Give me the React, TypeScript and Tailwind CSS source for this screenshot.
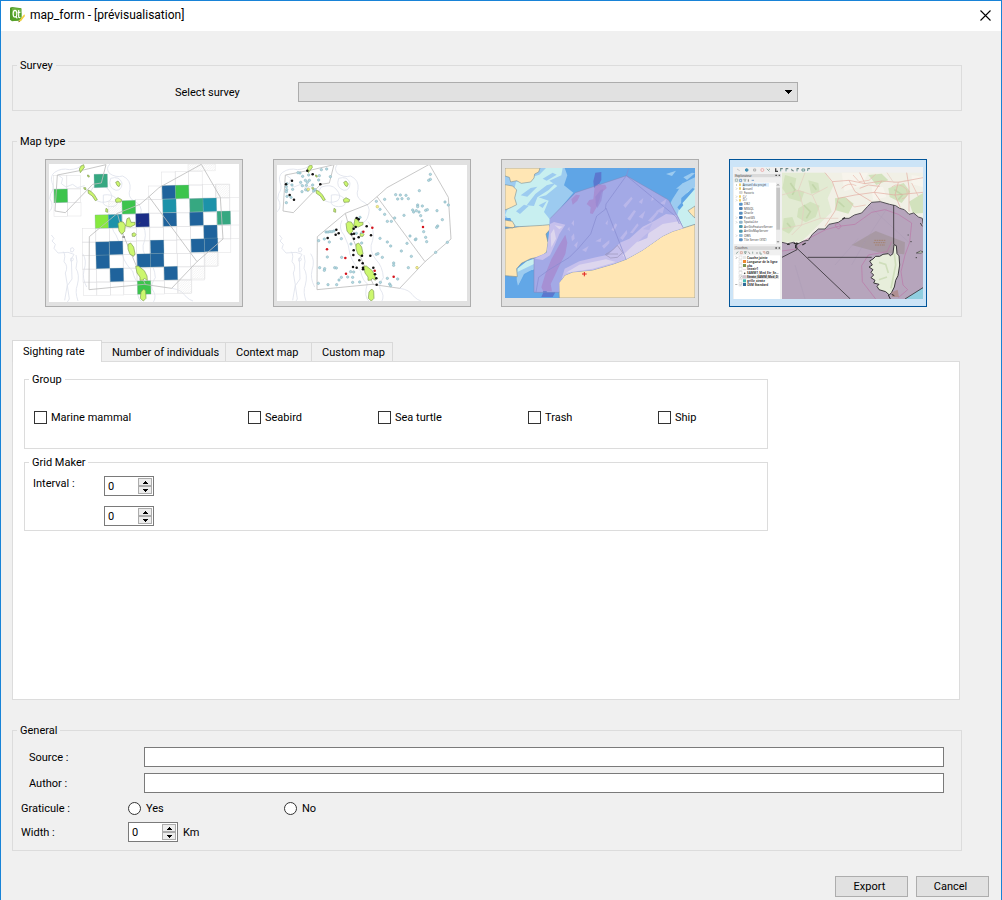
import { useState } from "react";
import type { ReactNode } from "react";

const BLUE = "#1f639c";
const GREEN = "#3cc44c";
const TEAL = "#36a881";
const CYAN = "#1c92a9";

const ISLANDS = [
  "M234 206 l6-6 10 1 6 10 -2 18 -9 9 -8-10z",
  "M257 213 l4-22 7-3 5 14 12 0 0 7 -14 7z",
  "M276 236 l7-3 5 5 -3 6 -8 0z",
  "M264 268 l8-4 9 12 4 20 -4 8 -11-6 -6-16z",
  "M287 334 l8-1 18 14 8 16 1 13 -9-6 -3 5 -10 1 0-10 -9-12z",
  "M303 411 l8-9 6 6 1 22 -8 8 -9-8z",
  "M227 82 l7-4 7 9 -4 8 -6-4z",
  "M226 134 l8-6 11 6 -2 7 -15 1z",
  "M198 160 l5 3 0 9 -6-2z",
  "M144 105 l9 4 10 10 9 15 -6 3 -9-14 -12-8z",
  "M118 42 l5-9 8-4 2 8 -6 8 -6 8z",
  "M131 98 l6 0 1 6 -5-1z",
  "M142 60 l5 1 1 5 -4 0z",
];

const SURVEY_LINES = [
  "M45 168 L76 173 L158 88 L184 84 L198 29 L134 44 L52 60 Z",
  "M148 245 L232 175 L300 148 L327 125 L357 98 L484 28 L541 127 L549 252 L471 320 L395 400 L312 388 L147 404 Z",
  "M327 125 L471 320",
  "M232 175 L250 240 L290 335 L316 388",
];

const CONTOURS = [
  "M27 170 q12-8 8-28 q-10-10-3-26 q12-16 4-34 q-6-20 8-30 q20-14 44-8 q30-2 36-14",
  "M210 27 q-14 12-2 28 q20 14 40 8 q26 12 22 40 q-8 22 10 34 q30 14 22 40 q-6 30-28 26",
  "M34 240 l8 10 -6 8 10 10 -4 12 12 14 30-2 18 6 -8 14 2 60 -14 20 6 40 -12 18 -22 4",
  "M70 290 q8 12 2 30 q14 14 4 34 l6 36 -8 46",
  "M108 300 q6 18 0 40 q12 20 4 50 q-8 20 2 48",
  "M128 296 q14 20 4 50 q-6 24 8 50",
  "M222 196 q-12 24 6 44 q16 30 18 58 q12 34 32 50 q6 30 20 38 q-12 40 6 54",
  "M300 200 q22 24 14 56 q-14 30 10 58 q20 20 22 54 q-14 20-10 34 q16 20 4 40",
  "M395 400 q30 4 40 22 q14 14 24 16",
  "M160 96 q30-10 44 6 q20 22 4 36 q-26 10-44-6 q-20-18-4-36z",
  "M190 120 q24-4 38 10 q10 20-6 24 q-22 4-32-8z",
  "M212 70 q26-8 34 14 q0 22-18 22 q-26-8-16-36z",
  "M92 280 q8-6 10 4 q-2 10-10 6z",
  "M92 310 q8-4 8 4 q-4 8-8 4z",
  "M54 60 l14 10 -4 16 14 10 20-8 14 10 22-6",
];

function BaseMap() {
  return (
    <g fill="none">
      {CONTOURS.map((d) => (
        <path key={d} d={d} stroke="#dfe2ec" strokeWidth="2.5" />
      ))}
    </g>
  );
}

function Islands() {
  return (
    <g fill="#ccf76e" stroke="#7f9a55" strokeWidth="2">
      {ISLANDS.map((d) => (
        <path key={d} d={d} />
      ))}
    </g>
  );
}

const GRID_CELLS: [number, number, string][] = [
  [42, 103, GREEN], [162, 58, TEAL], [246, 137, GREEN], [165, 180, "#86e93f"], [205, 179, CYAN],
  [287, 176, "#1b2d87"], [366, 92, BLUE], [406, 91, GREEN], [368, 133, CYAN], [449, 131, TEAL],
  [489, 130, CYAN], [369, 174, BLUE], [449, 172, BLUE], [531, 169, TEAL], [491, 211, BLUE],
  [453, 252, BLUE], [493, 250, BLUE], [167, 261, BLUE], [208, 259, BLUE], [168, 301, BLUE],
  [331, 256, BLUE], [291, 297, BLUE], [331, 296, BLUE], [210, 340, BLUE], [372, 335, BLUE],
  [292, 378, GREEN],
];

const EMPTY_ROWS: [number, number, number][] = [
  [40, 62, 2], [41, 102, 2], [42, 143, 2], [365, 51, 3], [325, 93, 6], [286, 134, 8], [166, 180, 10],
  [127, 221, 12], [127, 261, 11], [128, 302, 10], [129, 342, 9], [130, 381, 8],
];

function GridMap() {
  return (
    <svg viewBox="27 27 570 414" className="h-[138px] w-[190px] bg-white" aria-hidden="true">
      <defs>
        <pattern id="hatch" width="7" height="7" patternUnits="userSpaceOnUse">
          <path d="M0 7 L7 0" stroke="#dedede" strokeWidth="1" />
        </pattern>
      </defs>
      <BaseMap />
      <g fill="url(#hatch)" stroke="#e6e6e6" strokeWidth="1.5">
        <path d="M444 27 h82 v20 h-82z M527 87 h42 v41 h-42z M206 139 h40 v40 h-40z M495 291 h41 v41 h-41z M455 332 h40 v40 h-40z M415 373 h40 v41 h-40z" />
      </g>
      <g fill="none" stroke="#e0e0e2" strokeWidth="1.5">
        {EMPTY_ROWS.flatMap(([x, y, n]) =>
          Array.from({ length: n }, (_, i) => (
            <rect key={`${x}-${y}-${i}`} x={x + i * 40.5} y={y - i} width="40.5" height="41" />
          )),
        )}
      </g>
      {GRID_CELLS.map(([x, y, fill]) => (
        <path key={`${x}-${y}`} d={`M${x} ${y} l40 -1 l1 40 l-40 1z`} fill={fill} stroke="#7aa0a8" strokeWidth="0.8" />
      ))}
      <g fill="none" stroke="#bdbdbd" strokeWidth="2.5">
        {SURVEY_LINES.map((d) => (
          <path key={d} d={d} />
        ))}
      </g>
      <Islands />
      <path d="M247 246 h8 M296 206 l5-3" stroke="#555" strokeWidth="3" />
    </svg>
  );
}

const SIGHTINGS: [number, number][] = [
  [160, 44], [176, 42], [96, 54], [122, 60], [154, 62], [187, 65], [90, 53], [104, 64], [152, 75], [112, 76],
  [124, 76], [98, 82], [118, 82], [115, 91], [103, 92], [134, 90], [57, 86], [72, 90], [55, 95], [74, 103],
  [56, 104], [55, 110], [113, 104], [119, 106], [102, 110], [141, 104], [137, 108], [57, 124], [69, 127],
  [55, 143], [487, 58], [487, 73], [482, 76], [454, 107], [383, 119], [397, 120], [414, 121], [389, 132],
  [402, 131], [421, 131], [350, 133], [325, 139], [541, 150], [531, 141], [449, 150], [449, 155], [463, 153],
  [434, 165], [445, 167], [453, 171], [473, 166], [478, 164], [507, 167], [437, 171], [336, 163], [350, 178],
  [408, 181], [458, 182], [523, 194], [380, 189], [358, 199], [370, 199], [462, 197], [509, 213], [506, 217],
  [467, 230], [473, 247], [476, 260], [442, 254], [426, 243], [417, 265], [538, 262], [503, 292], [336, 250],
  [358, 261], [368, 273], [430, 304], [400, 288], [343, 307], [325, 298], [377, 324], [377, 331], [421, 338],
  [152, 257], [169, 252], [184, 261], [220, 251], [249, 267], [281, 264], [178, 306], [221, 307], [155, 338],
  [170, 341], [169, 346], [200, 338], [205, 339], [220, 367], [239, 366], [248, 350], [257, 351], [254, 367],
  [254, 382], [275, 381], [213, 375], [206, 389], [180, 389], [151, 385], [337, 382], [358, 370], [389, 372],
  [365, 387], [368, 392], [174, 231], [180, 231], [186, 230], [192, 230], [198, 228], [265, 235], [282, 232],
  [276, 187], [330, 296], [444, 252],
];

const BLACK_DOTS: [number, number][] = [
  [118, 47], [134, 58], [72, 77], [54, 88], [157, 88], [65, 120], [78, 134], [205, 224], [212, 235], [203, 239],
  [179, 249], [266, 189], [272, 193], [263, 216], [296, 214], [257, 221], [309, 241], [251, 238], [258, 236],
  [272, 247], [258, 251], [257, 286], [256, 300], [282, 302], [307, 302], [274, 316], [284, 325], [255, 336],
  [266, 338], [285, 338], [285, 343], [316, 338], [321, 358], [325, 370], [326, 389],
];

const RED_DOTS: [number, number][] = [
  [313, 218], [286, 230], [177, 283], [232, 309], [234, 356], [320, 347], [377, 365], [465, 216],
];

function SightingsMap() {
  return (
    <svg viewBox="27 30 570 408" className="h-[136px] w-[190px] bg-white" aria-hidden="true">
      <BaseMap />
      <g fill="none" stroke="#bdbdbd" strokeWidth="2.5">
        {SURVEY_LINES.map((d) => (
          <path key={d} d={d} />
        ))}
      </g>
      <Islands />
      <g fill="#b4dbe3" stroke="#84adba" strokeWidth="1.6">
        {SIGHTINGS.map(([x, y]) => (
          <circle key={`${x}-${y}`} cx={x} cy={y} r="3.6" />
        ))}
      </g>
      <g fill="#f5f08a" stroke="#b9b46a" strokeWidth="1.5">
        <circle cx="121" cy="103" r="4" />
        <circle cx="328" cy="155" r="4" />
        <circle cx="447" cy="338" r="4" />
      </g>
      <g fill="#111">
        {BLACK_DOTS.map(([x, y]) => (
          <circle key={`${x}-${y}`} cx={x} cy={y} r="3.8" />
        ))}
      </g>
      <g fill="#d4141c">
        {RED_DOTS.map(([x, y]) => (
          <circle key={`${x}-${y}`} cx={x} cy={y} r="3.8" />
        ))}
      </g>
    </svg>
  );
}

function ContextMap() {
  return (
    <svg viewBox="27 38 570 390" className="h-[130px] w-[190px]" aria-hidden="true">
      <rect x="27" y="38" width="570" height="390" fill="#5fa5e6" />
      <path d="M27 38 H206 L214 60 L204 90 L232 112 L200 150 L166 196 L160 214 L27 214Z" fill="#9ccbf0" />
      <path d="M60 80 L130 58 L150 38 L200 38 L196 60 L160 76 L184 92 L150 120 L128 126 L158 136 L144 170 L160 190 L160 214 L60 212 L27 180 L48 130z" fill="#c8eff0" />
      <path d="M92 150 l26-34 34-26 28-8 -22 22 -34 22 -10 26z M60 168 l24-20 14 4 -26 24z M74 120 l30-22 20-4 -30 30z M140 70 l30-18 12 6 -30 18z M128 150 l24-12 -12 20z" fill="#9ccbf0" />
      <path d="M597 66 L560 84 L530 130 L520 150 L560 218 L597 206z" fill="#9ccbf0" />
      <path d="M597 96 L574 110 L552 150 L544 180 L562 218 L597 206z" fill="#c8eff0" />
      <path d="M556 128 l34-30 7 2 -22 26 -20 22z M544 156 l14-16 4 10 -12 14z" fill="#5fa5e6" />
      <path d="M510 56 l30-10 -12 16z M562 66 l26-14 9 2 -24 20z M540 100 l22-18 -4 18z" fill="#9ccbf0" />
      <path d="M27 188 h16 l6 16 -22-4z" fill="#5fa5e6" />
      <path d="M64 340 L92 318 L114 310 L114 342 L80 350 L62 380z" fill="#c8eff0" />
      <path d="M64 350 L114 326 V340 L84 356 L66 392 L60 396z" fill="#9ccbf0" />
      <path d="M27 362 L60 366 L66 392 L90 356 L114 346 V411 H190 V428 H27z" fill="#62a7e7" />
      <path d="M146 306 L158 290 L160 210 L175 206 L160 312z" fill="#c8eff0" />
      <path d="M27 38 H132 L128 50 L116 56 L114 68 L104 80 L76 84 L62 76 L44 80 L40 66 L27 62z M27 88 L50 92 L62 104 L56 128 L62 148 L46 156 L27 164z M27 194 l22 4 8 14 -6 6 -24-4z M27 220 L70 214 L140 210 L160 208 L164 220 L150 236 L156 262 L152 290 L136 304 L104 310 L76 324 L62 340 L64 364 L27 361z" fill="#ffe6b4" stroke="#7c8f93" strokeWidth="1.8" />
      <path d="M597 152 L576 166 L588 180 L597 188z" fill="#ffe6b4" stroke="#7c8f93" strokeWidth="1.8" />
      <path d="M190 428 L188 382 L196 374 L206 360 L230 350 L290 344 L352 326 L390 312 L440 284 L500 242 L530 228 L597 207 V428z" fill="#ffe6b4" stroke="#7c8f93" strokeWidth="1.8" />
      <path d="M114 308 L152 292 L158 262 L162 190 L238 112 L391 61 L518 134 L548 186 L562 218 L530 228 L500 242 L440 284 L390 312 L352 326 L290 344 L230 350 L206 360 L190 382 L190 411 H114z" fill="#a3a9e6" />
      <path d="M162 206 L174 200 L208 208 L190 236 L176 270 L162 300 L140 314 L116 310 L152 292z" fill="#c6c0ec" />
      <path d="M164 236 l10-16 6 30 -14 26z M176 210 l24 4 -10 8z" fill="#ddd6ee" />
      <path d="M196 374 L206 340 L250 318 L300 306 L336 298 L372 262 L400 250 L440 214 L476 196 L510 176 L542 180 L562 218 L530 228 L500 242 L440 284 L390 312 L352 326 L290 344 L230 350 L206 360z" fill="#c6c0ec" />
      <path d="M380 300 L420 262 L460 232 L500 206 L548 198 L562 218 L530 228 L500 242 L440 284 L390 312z M210 352 L250 328 L330 312 L360 320 L290 340z" fill="#ddd6ee" />
      <path d="M298 52 l18-2 0 24 -8 14 -14 10 -2-20z M140 411 l6-10 8 10z M158 411 h20 l-8 14 h-34 l6-14z" fill="#5b78cf" />
      <path d="M296 94 l12-8 8 2 12 0 4 10 -16 14 -4 16 -8 24 -14 24 -8-2 2-18 -12-10 8-12 12-2z M226 132 l14-14 12 2 -8 16 -14 12z M208 238 l6 24 -6 34 -20 40 -14 30 -10 20 4 22 -26 0 -6-12 12-40 18-44 24-44z" fill="#a690d4" />
      <path d="M298 124 l16-20 8-2 -6 34 -12 22 -4-8z" fill="#9386d0" opacity=".6" />
      <g fill="#b9b7ea">
        <path d="M382 150 l24-26 4 6 -22 28z M428 140 l14-12 -4 18z M468 120 l6 12 -8 6z M394 190 l20-26 6 4 -18 28z M428 184 l20-18 -8 24z M456 196 l28-30 4 6 -22 28z M480 168 l26-16 -6 22z M402 232 l22-28 4 6 -18 24z M346 224 l12-20 6 4 -10 20z M372 248 l20-24 2 10 -14 20z M298 258 l18-10 -2 12z M258 284 l20-12 -8 18z M318 272 l22-18 0 10 -16 16z M226 204 l8-10 0 18z M226 244 l8-10 2 16 -8 8z M214 222 l6-8 2 14z M440 222 l30-20 -10 22z M328 204 l8-10 -2 16z M492 144 l20-14 -6 18z M234 270 l12-12 -4 20z M424 260 l34-30 -4 18z" />
      </g>
      <path d="M398 40 L391 61 L330 146 L328 162 L302 182 L284 236 L248 278 L220 306 L158 344 L128 366 L120 410 M330 158 L390 312 M391 61 L540 184 L550 206" fill="none" stroke="#868bd0" strokeWidth="2" />
      <path d="M328 298 L350 284 L364 270 L380 292 L364 306 L344 308z M332 296 h34" fill="none" stroke="#9a94b8" strokeWidth="2" />
      <path d="M114 308 V411 H190 M162 190 L238 112 L391 61 L518 134 L562 218" fill="none" stroke="#8287ba" strokeWidth="1.5" />
      <path d="M265 350 v13 M258 356 h14" stroke="#e02020" strokeWidth="3" />
    </svg>
  );
}

const TREE_TOP: [string, number, number, string][] = [
  ["Accueil du projet", 93, 53, "#f0cf63"], ["Accueil", 104, 53, "#f0cf63"], ["Favoris", 116, 57, "#d4d4d4"],
  ["C:/", 128, 53, "#f0cf63"], ["D:/", 139, 53, "#f0cf63"], ["DB2", 151, 57, "#5a93c8"],
  ["MSSQL", 164, 57, "#4f82b4"], ["Oracle", 178, 57, "#5b8fc0"], ["PostGIS", 191, 57, "#3f74aa"],
  ["SpatiaLite", 205, 57, "#8fb4cc"], ["ArcGisFeatureServer", 218, 57, "#4f98ad"],
  ["ArcGisMapServer", 232, 57, "#4f98ad"], ["OWS", 245, 57, "#8abbdd"], ["Tile Server (XYZ)", 258, 57, "#5b8fc0"],
];

const TREE_LAYERS: [string, number, string][] = [
  ["Couche jointe", 311, "#e8e8e8"], ["Longueur de la ligne", 323, "#ef8a32"], ["obs", 335, "#7c9350"],
  ["lineair1", 346, "#ffffff"], ["SAMM1_Med_Etr_Se…", 358, "#ffffff"], ["Strate_SAMM_Med_D", 369, "#cfc0cf"],
  ["grille_strate", 381, "#43b9b4"], ["OSM Standard", 392, "#2f6a99"],
];

const COAST =
  "M171 262 L188 266 L206 262 L216 268 L236 258 L250 256 L262 238 L280 222 L300 222 L312 208 L340 202 L358 190 L372 190 L388 180 L410 174 L428 154 L440 142 L466 140 L494 148 L512 152 L524 160 L538 164 L552 178 L566 174 L580 186 L592 190 L594 206";

const CORSICA =
  "M507 269 L514 272 L516 296 L522 302 L524 330 L519 362 L512 376 L508 396 L500 412 L493 420 L482 410 L462 404 L456 394 L462 388 L446 384 L450 376 L438 368 L446 360 L438 352 L444 344 L432 336 L442 330 L434 318 L444 312 L452 304 L464 304 L474 298 L490 296 L496 302 L504 296z";

function CustomMap() {
  return (
    <svg viewBox="24 36 570 396" className="h-[132px] w-[190px]" aria-hidden="true">
      <rect x="24" y="36" width="570" height="396" fill="#f0f0f0" />
      <g fill="none" strokeWidth="3">
        <path d="M36 42 l8 5" stroke="#c8c8c8" />
        <circle cx="65" cy="45" r="4" stroke="#3f8fb5" fill="#3f8fb5" />
        <path d="M86 42 h6 v6 h-6z" stroke="#b0b0b0" />
        <circle cx="112" cy="45" r="4.5" stroke="#efb0b0" />
        <path d="M125 41 l8 8 M133 41 v4" stroke="#8fa8a0" />
        <path d="M152 40 v9 h7" stroke="#444" strokeWidth="4" />
        <path d="M167 49 v-8 h7 M183 49 v-8 h7 M198 42 l8 6 M216 49 v-8 h6 M231 48 v-6 h8 v6z M248 48 v-7 h7" stroke="#6d9a98" />
        <path d="M165 41 h6 M182 41 h6 M199 47 h6 M215 41 h6 M248 41 h6" stroke="#666" strokeWidth="2" />
      </g>
      <path d="M27 57 h141 v10 H27z M27 274 h141 v11 H27z" fill="#dadada" />
      <g className="font-['Noto_Sans',sans-serif]" fontSize="9" fill="#444">
        <text x="31" y="66">Explorateur</text>
        <text x="31" y="283">Couches</text>
      </g>
      <path d="M151 61 h5 M161 61 h4 M151 279 h5 M161 279 h4" stroke="#555" strokeWidth="4" />
      <g strokeWidth="2.5" fill="none">
        <path d="M31 72 h7 v7 h-7z M56 73 h7 l-3 7z" stroke="#9db3ac" />
        <path d="M44 73 h6 v7 h-6z M80 76 h7" stroke="#5e8fc4" />
        <path d="M70 73 v7" stroke="#666" />
        <path d="M33 296 l7-6 M58 290 h6 l-3 7z M83 290 v6 M105 290 v7 h6" stroke="#7d9a93" />
        <path d="M46 290 h6 v6 h-6z M114 290 h6 v6z" stroke="#d8a598" />
        <path d="M70 290 l5 7 M93 294 h6 M125 290 h6 v6 h-6z" stroke="#8a8a8a" />
      </g>
      <rect x="27" y="83" width="126" height="184" fill="#fff" />
      <rect x="153" y="83" width="12" height="184" fill="#ececec" />
      <rect x="154" y="98" width="11" height="126" fill="#c6c6c6" />
      <path d="M156 92 l3-4 3 4 M156 258 l3 4 3-4" fill="none" stroke="#666" strokeWidth="2" />
      <rect x="50" y="84" width="82" height="11" fill="#dcefff" />
      <g className="font-['Noto_Sans',sans-serif]" fontSize="9" fill="#444">
        {TREE_TOP.map(([name, y, x, color], i) => (
          <g key={name}>
            {[0, 1, 3, 4, 8, 9, 12].includes(i) && (
              <path d={`M33 ${y - 6} l3 3 -3 3`} fill="none" stroke="#999" strokeWidth="1.5" />
            )}
            <rect x={x === 53 ? 42 : 42} y={y - 8} width={x === 53 ? 6 : 11} height="9" rx="3" fill={color} />
            <text x={x} y={y}>{name}</text>
          </g>
        ))}
      </g>
      <rect x="27" y="301" width="138" height="131" fill="#fff" />
      <rect x="50" y="361" width="112" height="10" fill="#dcdcdc" />
      <g className="font-['Noto_Sans',sans-serif]" fontSize="9" fontWeight="700" fill="#333">
        {TREE_LAYERS.map(([name, y, color]) => (
          <g key={name}>
            <rect x="42" y={y - 8} width="9" height="9" fill="#fff" stroke="#bbb" strokeWidth="1" />
            <rect x="54" y={y - 8} width="9" height="9" fill={color} />
            <text x="66" y={y}>{name}</text>
          </g>
        ))}
      </g>
      <path d="M54 344 h9" stroke="#e3bcd6" strokeWidth="2" />
      <circle cx="59" cy="355" r="2.5" fill="#444" />
      <path d="M44 366 l2 2 4-5 M44 389 l2 2 4-5" fill="none" stroke="#777" strokeWidth="1.5" />
      <path d="M31 387 l3 3 3-3 M33 305 l3 3 -3 3" fill="none" stroke="#777" strokeWidth="2" />
      <rect x="171" y="53" width="423" height="379" fill="#f1f0e6" />
      <path d="M171 53 L300 53 L326 90 L308 130 L320 170 L290 200 L250 240 L230 258 L171 262z" fill="#e2ebd3" />
      <path d="M180 60 l34 10 -6 32 30 8 -10 30 -36-10 -20-30z M220 160 l36-20 28 12 -12 34 -30 16 -26-16z M176 190 l26-4 10 26 -20 24 -20-10z M250 76 l30 8 4 26 -26 6z M330 130 l30-4 26 20 -16 30 -38-10z M430 60 l40-4 20 20 -36 14z M490 100 l46-16 20 26 -26 34 -36-18z M552 140 l42-26 v60 l-30 2z" fill="#d2e2bd" />
      <path d="M196 84 l14 20 -8 16 M236 150 l20 20 -12 20 M186 204 l12 14 M262 88 l12 16 M340 140 l18 16 M508 104 l24 16 -12 14" fill="none" stroke="#c2d6aa" strokeWidth="5" />
      <path d="M350 53 h80 l-20 40 -52 16z M440 96 l34 0 10 30 -40 10z M560 60 l34 6 v30 l-34-8z" fill="#f7f4ec" />
      <g fill="none" stroke="#e3aaa0" strokeWidth="2">
        <path d="M300 53 L322 80 L372 76 L420 86 L470 78 L520 82 L594 68 M372 76 L390 110 L440 140 M420 86 L404 53 M470 78 L448 112 L466 138 M520 82 L510 120 L526 158 M322 80 L340 130 L330 168 L300 214 M340 130 L390 120 L448 112 L510 120 L594 112 M545 53 L552 96 L552 170 M404 100 l26-10 34 4" />
        <path d="M171 120 L220 106 L262 120 L308 96 M171 222 L230 210 L286 190 L340 190 M240 53 L220 106 L236 160 L230 210 M262 120 L280 160 L286 190 M486 53 l20 30 40-6 M200 240 l30-30" stroke="#e6cbbf" />
        <path d="M384 60 l18 20 30-4 20-18 M500 96 q20-16 44 6 q10 24-14 30 M350 100 q20-20 44-8 M364 130 l24 26 34-6 M560 84 l20 40" stroke="#e9b9ad" />
      </g>
      <path d={`${COAST} V432 H171z`} fill="#b6a5bc" />
      <path d="M540 432 L594 398 V432z" fill="#90cfe0" />
      <path d="M380 270 L452 228 L540 262 L538 298 L460 292z" fill="#a3969c" opacity=".75" />
      <path d="M448 256 h34 M446 263 h36 M450 270 h30" stroke="#a5826f" strokeWidth="3" strokeDasharray="5 2" />
      <path d="M430 150 L560 270 M210 330 L240 432 M400 250 L330 330 M486 160 L420 260 L380 330" fill="none" stroke="#a798b4" strokeWidth="1" />
      <path d="M214 282 L240 256 L302 224 L340 214 L390 208 L440 172 L480 164 L520 178 L560 204 L554 262 L540 300 L528 350 L534 390 L548 404 L520 428 M452 432 L412 380 L410 332 L430 300 L486 290 L500 260 M330 210 q12-10 18 4 q-8 16-18-4 M171 288 L214 282" fill="none" stroke="#bb77a8" strokeWidth="2" />
      <path d={COAST} fill="none" stroke="#4a474c" strokeWidth="2.8" strokeLinejoin="round" />
      <path d="M206 264 l8 4 6-4 M232 270 l10-6 M186 268 h8 M212 270 v10 M352 192 l8-4" fill="none" stroke="#2d2b2e" strokeWidth="4" />
      <path d="M506 150 V268 M248 307 H440 M214 278 L376 432 M171 307 L216 284 L214 262 M540 432 L594 398" fill="none" stroke="#353136" strokeWidth="2.5" />
      <path d={CORSICA} fill="#e7eedb" stroke="#2d2b2e" strokeWidth="2.8" strokeLinejoin="round" />
      <path d="M508 296 l4 34 -8 40 -6 30 M462 322 l20 6 8 26 M462 374 l24-8" fill="none" stroke="#cfdebb" strokeWidth="5" />
      <path d="M500 412 l18-8 4 22 h-22z" fill="#b08f92" />
      <path d="M490 420 l6 12 M500 418 l8 4" stroke="#2d2b2e" strokeWidth="3" />
      <path d="M574 294 l12-6 8 2 -4 4z" fill="#dfe6d0" stroke="#333" strokeWidth="2" />
      <path d="M556 260 h4 M548 240 h3 M572 308 h4 M586 204 l6 10" stroke="#444" strokeWidth="3" />
    </svg>
  );
}

const MAP_TYPES = [
  { name: "Sighting rate grid", Picture: GridMap },
  { name: "Individual sightings", Picture: SightingsMap },
  { name: "Context", Picture: ContextMap },
  { name: "Custom", Picture: CustomMap },
];

const TABS = [
  { name: "Sighting rate", width: "w-[90px]" },
  { name: "Number of individuals", width: "w-[124px]" },
  { name: "Context map", width: "w-[86px]" },
  { name: "Custom map", width: "w-[81px]" },
];

function GroupBox({ title, className, children }: { title: string; className: string; children: ReactNode }) {
  return (
    <fieldset className="min-w-0 border border-[#dcdcdc]">
      <legend className="ml-1 h-[15px] px-[3px] leading-[15px]">{title}</legend>
      <div className={className}>{children}</div>
    </fieldset>
  );
}

function SpinBox({ id, label }: { id: string; label?: string }) {
  const [value, setValue] = useState(0);
  const step =
    "flex h-2 w-[14px] items-center justify-center border border-[#acacac] bg-[#ececec] hover:bg-[#e5f1fb]";
  return (
    <div className="flex h-5 w-[50px] items-center border border-[#7a7a7a] bg-white pr-px">
      <input
        id={id}
        type="number"
        aria-label={label}
        value={value}
        onChange={(e) => setValue(Number(e.target.value))}
        className="h-full w-0 grow appearance-none bg-transparent pl-[3px] outline-none [-moz-appearance:textfield] [&::-webkit-inner-spin-button]:appearance-none"
      />
      <div className="flex flex-col">
        <button type="button" aria-label="Increase" className={step} onClick={() => setValue(value + 1)}>
          <svg viewBox="0 0 5 3" className="h-[3px] w-[5px]" shapeRendering="crispEdges">
            <path d="M2 0h1v1h1v1h1v1H0V2h1V1h1z" />
          </svg>
        </button>
        <button type="button" aria-label="Decrease" className={step} onClick={() => setValue(Math.max(0, value - 1))}>
          <svg viewBox="0 0 5 3" className="h-[3px] w-[5px]" shapeRendering="crispEdges">
            <path d="M0 0h5v1H4v1H3v1H2V2H1V1H0z" />
          </svg>
        </button>
      </div>
    </div>
  );
}

function CheckBox({ label }: { label: string }) {
  return (
    <label className="flex items-center gap-1">
      <input
        type="checkbox"
        className="size-[13px] appearance-none border border-[#333] bg-white checked:bg-[#333] checked:shadow-[inset_0_0_0_2px_white]"
      />
      {label}
    </label>
  );
}

function Radio({ name, label }: { name: string; label: string }) {
  return (
    <label className="flex items-center gap-[5px]">
      <input
        type="radio"
        name={name}
        className="size-[13px] appearance-none rounded-full border border-[#333] bg-white checked:bg-[#333] checked:shadow-[inset_0_0_0_3px_white]"
      />
      {label}
    </label>
  );
}

function AppIcon() {
  return (
    <svg viewBox="0 0 48 48" className="size-4" aria-hidden="true">
      <path d="M3 2 L9 0 L37 4 V40 L9 43 L3 38z" fill="#4f9a2c" />
      <path d="M9 2 L37 5 V39 L9 42z" fill="#6cb33f" />
      <path d="M9 25 L37 17 V39 L9 42z" fill="#54a028" />
      <ellipse cx="18" cy="20" rx="5.5" ry="10" fill="none" stroke="#fff" strokeWidth="3.5" />
      <path d="M20 28 l5 6 M29 9 v20 q0 4 5 2 M26 16 h8" fill="none" stroke="#fff" strokeWidth="3.5" />
      <path d="M46 22 L32 38 L28 46 L36 42 L48 27z" fill="#f3cf3d" />
      <path d="M28 46 l2-5 3 3z" fill="#6b5a20" />
    </svg>
  );
}

export default function App() {
  const [mapType, setMapType] = useState(3);
  const [tab, setTab] = useState(0);

  return (
    <div className="flex min-h-screen flex-col border-x border-t border-[#1883d7] bg-[#f0f0f0] font-['Roboto',sans-serif] text-[11px] leading-[15px] text-black">
      <header className="flex h-[30px] items-center gap-[5px] bg-white pb-[2px] pl-2 pr-[10px]">
        <AppIcon />
        <h1 className="text-xs">map_form - [prévisualisation]</h1>
        <button type="button" aria-label="Close" className="ml-auto">
          <svg viewBox="0 0 11 11" className="block size-[11px]">
            <path d="M.5 .5 L10.5 10.5 M10.5 .5 L.5 10.5" stroke="#000" strokeWidth="1.1" />
          </svg>
        </button>
      </header>

      <form className="flex grow flex-col pb-[3px] pl-[11px] pt-[27px]" onSubmit={(e) => e.preventDefault()}>
        <div className="flex grow flex-col gap-[23px] pr-[39px]">
          <GroupBox title="Survey" className="flex items-center pb-2 pl-[162px] pr-[163px] pt-[9px]">
            <label htmlFor="survey" className="w-[123px] shrink-0">
              Select survey
            </label>
            <div className="relative grow">
              <select id="survey" className="block h-5 w-full appearance-none border border-[#acacac] bg-[#e1e1e1] px-1">
                <option></option>
              </select>
              <svg
                viewBox="0 0 7 4"
                className="pointer-events-none absolute right-[6px] top-2 h-1 w-[7px]"
                shapeRendering="crispEdges"
              >
                <path d="M0 0h7v1H6v1H5v1H4v1H3V3H2V2H1V1H0z" />
              </svg>
            </div>
          </GroupBox>

          <GroupBox title="Map type" className="flex gap-[30px] pb-[9px] pl-8 pt-[10px]">
            {MAP_TYPES.map(({ name, Picture }, i) => (
              <button
                key={name}
                type="button"
                aria-label={name}
                aria-pressed={mapType === i}
                onClick={() => setMapType(i)}
                className={`flex h-[148px] w-[198px] items-center justify-center border ${
                  mapType === i ? "border-[#005499] bg-[#cce4f7]" : "border-[#adadad] bg-[#e1e1e1]"
                }`}
              >
                <Picture />
              </button>
            ))}
          </GroupBox>

          <div className="mr-[2px] flex grow flex-col">
            <div role="tablist" className="flex h-[21px] items-end">
              {TABS.map(({ name, width }, i) => (
                <button
                  key={name}
                  type="button"
                  role="tab"
                  aria-selected={tab === i}
                  onClick={() => setTab(i)}
                  className={`whitespace-nowrap border-r border-t border-[#d9d9d9] pl-[10px] text-left ${width} ${
                    tab === i ? "z-10 -mb-px h-[22px] border-l bg-white pb-px" : "h-[19px] bg-[#f0f0f0]"
                  }`}
                >
                  {name}
                </button>
              ))}
            </div>
            <div role="tabpanel" className="grow border border-[#dcdcdc] bg-white pb-4 pl-[11px] pr-[191px] pt-[10px]">
              {tab === 0 && (
                <div className="flex flex-col gap-[6px]">
                  <GroupBox
                    title="Group"
                    className="grid grid-cols-[214px_130px_150px_130px_1fr] pb-[23px] pl-[9px] pt-[23px]"
                  >
                    <CheckBox label="Marine mammal" />
                    <CheckBox label="Seabird" />
                    <CheckBox label="Sea turtle" />
                    <CheckBox label="Trash" />
                    <CheckBox label="Ship" />
                  </GroupBox>
                  <GroupBox title="Grid Maker" className="flex pb-1 pl-2 pt-[6px]">
                    <label htmlFor="interval-x" className="w-[71px]">
                      Interval :
                    </label>
                    <div className="flex flex-col gap-[10px]">
                      <SpinBox id="interval-x" />
                      <SpinBox id="interval-y" label="Second interval" />
                    </div>
                  </GroupBox>
                </div>
              )}
            </div>
          </div>

          <GroupBox title="General" className="flex flex-col gap-2 pb-2 pl-2 pr-[17px] pt-[9px]">
            <div className="grid grid-cols-[115px_1fr] items-center gap-y-[6px] pl-2">
              <label htmlFor="source">Source :</label>
              <input id="source" type="text" className="h-5 border border-[#7a7a7a] bg-white px-1" />
              <label htmlFor="author">Author :</label>
              <input id="author" type="text" className="h-5 border border-[#7a7a7a] bg-white px-1" />
            </div>
            <div role="radiogroup" aria-label="Graticule" className="grid h-[13px] grid-cols-[107px_156px_1fr] items-center">
              <span>Graticule :</span>
              <Radio name="graticule" label="Yes" />
              <Radio name="graticule" label="No" />
            </div>
            <div className="grid grid-cols-[107px_1fr] items-center">
              <label htmlFor="width">Width :</label>
              <div className="flex items-center gap-[5px]">
                <SpinBox id="width" />
                <span>Km</span>
              </div>
            </div>
          </GroupBox>
        </div>

        <div className="mt-[25px] flex justify-end gap-2 pr-3">
          <button type="submit" className="h-[21px] w-[73px] border border-[#adadad] bg-[#e1e1e1] pr-1">
            Export
          </button>
          <button type="button" className="h-[21px] w-[73px] border border-[#adadad] bg-[#e1e1e1] pr-1">
            Cancel
          </button>
        </div>
      </form>
    </div>
  );
}
